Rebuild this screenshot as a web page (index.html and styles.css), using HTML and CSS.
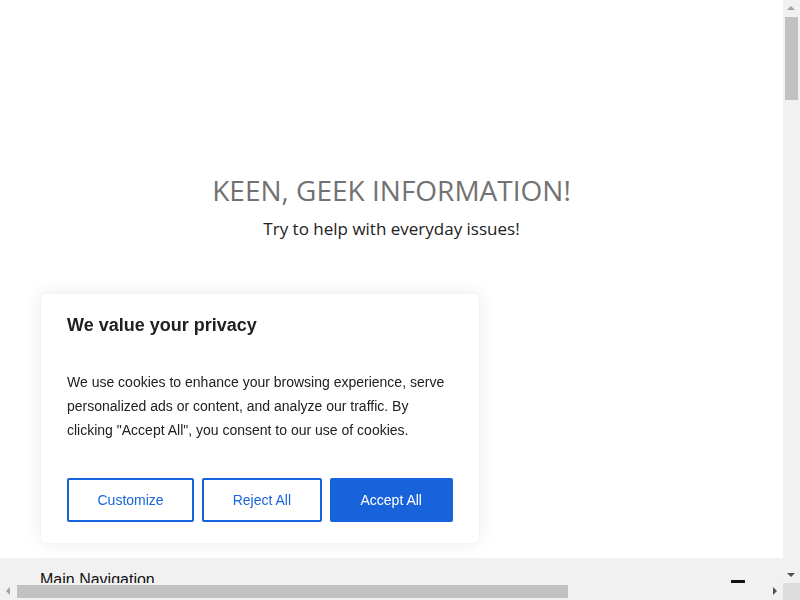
FILE: index.html
```html
<!DOCTYPE html>
<html lang="en">
<head>
  <meta charset="UTF-8" />
  <meta name="viewport" content="width=device-width, initial-scale=1.0"/>
  <title>Keen, Geek Information!</title>
  <link rel="stylesheet" href="styles.css">
</head>
<body>

  <div class="page">
    <header class="site-header">
      <h1 class="site-title">KEEN, GEEK INFORMATION!</h1>
      <p class="site-tagline">Try to help with everyday issues!</p>
    </header>

    <!-- Main navigation (collapsed toggle) -->
    <nav class="main-nav">
      <div class="nav-row">
        <span class="nav-label">Main Navigation</span>
        <span class="nav-toggle"></span>
      </div>
    </nav>

    <main class="content">
      <article class="post">
        <h2>Latest posts</h2>
        <p>Loading articles...</p>
      </article>
    </main>
  </div>

  <!-- Cookie consent -->
  <div class="cookie-banner">
    <h2 class="cookie-title">We value your privacy</h2>
    <p class="cookie-text">We use cookies to enhance your browsing experience, serve personalized ads or content, and analyze our traffic. By clicking "Accept All", you consent to our use of cookies.</p>
    <div class="cookie-actions">
      <button class="btn btn-outline">Customize</button>
      <button class="btn btn-outline">Reject All</button>
      <button class="btn btn-solid">Accept All</button>
    </div>
  </div>

  <!-- window scrollbars -->
  <div class="scroll-v">
    <span class="arrow arrow-up"></span>
    <span class="thumb-v"></span>
    <span class="arrow arrow-down"></span>
  </div>
  <div class="scroll-h">
    <span class="arrow arrow-left"></span>
    <span class="thumb-h"></span>
    <span class="arrow arrow-right"></span>
  </div>
  <div class="scroll-corner"></div>

</body>
</html>
```

FILE: styles.css
```css
html {
  overflow: hidden;
}
body {
  margin: 0;
  font-family: "Liberation Sans", Arial, sans-serif;
  background: #fff;
  color: #222;
}
.page {
  width: 783px;
}
.site-header {
  text-align: center;
  padding: 170px 20px 0;
  height: 558px;
  box-sizing: border-box;
}
.site-title {
  margin: 0;
  font-family: "Open Sans", sans-serif;
  font-size: 28px;
  font-weight: 400;
  line-height: 40px;
  color: #727272;
}
.site-tagline {
  margin: 0;
  font-family: "Open Sans", sans-serif;
  font-size: 17px;
  line-height: 38px;
  color: #222;
}
.main-nav {
  background: #f1f1f1;
}
.nav-row {
  display: flex;
  align-items: flex-start;
  justify-content: space-between;
  padding: 13px 38px 12px 40px;
  height: 48px;
  box-sizing: border-box;
}
.nav-label {
  font-size: 16px;
  line-height: 18px;
  color: #111;
}
.nav-toggle {
  width: 14px;
  height: 3px;
  margin-top: 9px;
  background: #111;
}
.content {
  min-height: 3200px;
  padding: 40px;
}

/* cookie consent */
.cookie-banner {
  position: fixed;
  left: 40px;
  bottom: 56px;
  width: 440px;
  box-sizing: border-box;
  padding: 19px 24px 21px 26px;
  background: #fff;
  border: 1px solid #f4f4f4;
  border-radius: 6px;
  box-shadow: 0 0 18px rgba(0, 0, 0, 0.08);
}
.cookie-title {
  margin: 0;
  font-size: 18px;
  line-height: 24px;
  font-weight: 700;
  color: #212121;
}
.cookie-text {
  margin: 33px 0 0;
  font-size: 14px;
  line-height: 24px;
  color: #212121;
}
.cookie-actions {
  display: flex;
  gap: 8px;
  margin-top: 36px;
}
.btn {
  font-family: "Liberation Sans", Arial, sans-serif;
  font-size: 14px;
  line-height: 24px;
  padding: 8px 28.5px;
  border: 2px solid #1863dc;
  border-radius: 2px;
  white-space: nowrap;
  flex: none;
  cursor: pointer;
}
.btn-outline {
  background: #fff;
  color: #1863dc;
}
.btn-solid {
  padding: 8px 29px;
  background: #1863dc;
  color: #fff;
}

/* scrollbars */
.scroll-v {
  position: fixed;
  top: 0;
  right: 0;
  width: 17px;
  height: 583px;
  background: #f1f1f1;
}
.thumb-v {
  position: absolute;
  top: 17px;
  left: 2px;
  width: 13px;
  height: 83px;
  background: #c1c1c1;
}
.scroll-h {
  position: fixed;
  left: 0;
  bottom: 0;
  width: 783px;
  height: 17px;
  background: #f1f1f1;
}
.thumb-h {
  position: absolute;
  left: 17px;
  top: 2px;
  width: 551px;
  height: 13px;
  background: #c1c1c1;
}
.scroll-corner {
  position: fixed;
  right: 0;
  bottom: 0;
  width: 17px;
  height: 17px;
  background: #dcdcdc;
}
.arrow {
  position: absolute;
  width: 0;
  height: 0;
}
.arrow-up {
  top: 6px;
  left: 4px;
  border-left: 4px solid transparent;
  border-right: 4px solid transparent;
  border-bottom: 4px solid #a3a3a3;
}
.arrow-down {
  bottom: 6px;
  left: 4px;
  border-left: 4px solid transparent;
  border-right: 4px solid transparent;
  border-top: 4px solid #505050;
}
.arrow-left {
  left: 6px;
  top: 4px;
  border-top: 4px solid transparent;
  border-bottom: 4px solid transparent;
  border-right: 4px solid #a3a3a3;
}
.arrow-right {
  right: 6px;
  top: 4px;
  border-top: 4px solid transparent;
  border-bottom: 4px solid transparent;
  border-left: 4px solid #505050;
}
```
